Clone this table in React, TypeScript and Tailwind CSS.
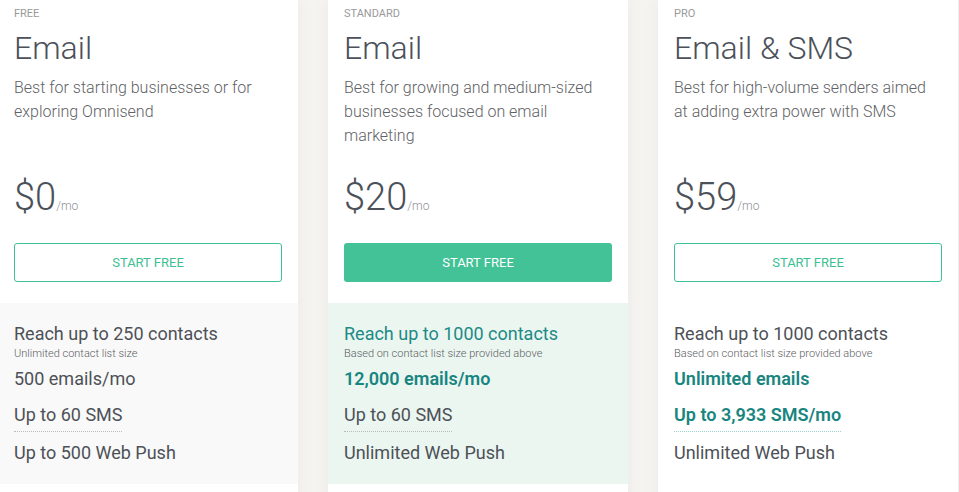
import React from 'react';

interface Plan {
    tier: string;
    name: string;
    description: string;
    price: string;
    filled: boolean;
    featureBg: string;
    reach: string;
    reachTeal: boolean;
    reachNote: string;
    emails: string;
    emailsStrong: boolean;
    sms: string;
    smsStrong: boolean;
    push: string;
}

const plans: Plan[] = [
    {
        tier: 'FREE',
        name: 'Email',
        description: 'Best for starting businesses or for exploring Omnisend',
        price: '$0',
        filled: false,
        featureBg: 'bg-[#f9f9f9]',
        reach: 'Reach up to 250 contacts',
        reachTeal: false,
        reachNote: 'Unlimited contact list size',
        emails: '500 emails/mo',
        emailsStrong: false,
        sms: 'Up to 60 SMS',
        smsStrong: false,
        push: 'Up to 500 Web Push',
    },
    {
        tier: 'STANDARD',
        name: 'Email',
        description: 'Best for growing and medium-sized businesses focused on email marketing',
        price: '$20',
        filled: true,
        featureBg: 'bg-[#ebf6f1]',
        reach: 'Reach up to 1000 contacts',
        reachTeal: true,
        reachNote: 'Based on contact list size provided above',
        emails: '12,000 emails/mo',
        emailsStrong: true,
        sms: 'Up to 60 SMS',
        smsStrong: false,
        push: 'Unlimited Web Push',
    },
    {
        tier: 'PRO',
        name: 'Email & SMS',
        description: 'Best for high-volume senders aimed at adding extra power with SMS',
        price: '$59',
        filled: false,
        featureBg: 'bg-white',
        reach: 'Reach up to 1000 contacts',
        reachTeal: false,
        reachNote: 'Based on contact list size provided above',
        emails: 'Unlimited emails',
        emailsStrong: true,
        sms: 'Up to 3,933 SMS/mo',
        smsStrong: true,
        push: 'Unlimited Web Push',
    },
];

const PlanCard: React.FC<{ plan: Plan }> = ({ plan }) => {
    return (
        <div className="w-[300px] shrink-0 bg-white shadow-[0_0_14px_rgba(120,110,90,0.08)] flex flex-col">
            {/* Header */}
            <div className="px-4 pt-[6px] pb-[21px]">
                <div className="text-[11px] leading-4 text-[#9a9a9a]">{plan.tier}</div>
                <h2 className="mt-[6px] text-[32px] leading-10 font-light text-[#4b5059]">{plan.name}</h2>
                <p className="mt-[8px] min-h-[72px] text-[16px] leading-6 font-light text-[#5f6266]">{plan.description}</p>
                <div className="mt-[30px] flex items-baseline">
                    <span className="text-[38px] leading-[38px] font-light text-[#4b5059]">{plan.price}</span>
                    <span className="text-[12px] font-light text-[#8f9296]">/mo</span>
                </div>
                <button
                    className={
                        plan.filled
                            ? 'mt-[27px] w-full h-[39px] rounded-[3px] bg-[#42c296] text-white text-[13px]'
                            : 'mt-[27px] w-full h-[39px] rounded-[3px] border border-[#3ec295] text-[#3dbe93] text-[13px]'
                    }
                >
                    START FREE
                </button>
            </div>

            {/* Features */}
            <div className={`${plan.featureBg} px-4 pt-[19px] pb-[19px] text-[18px] leading-6 text-[#4d5157]`}>
                <div className={plan.reachTeal ? 'text-[#1c8a86]' : ''}>{plan.reach}</div>
                <div className="text-[11px] leading-[15px] font-light text-[#5a5d61]">{plan.reachNote}</div>
                <div className={plan.emailsStrong ? 'mt-[6px] font-semibold text-[#188580]' : 'mt-[6px]'}>{plan.emails}</div>
                <div className="mt-3">
                    <span
                        className={
                            plan.smsStrong
                                ? 'inline-block pb-1 border-b border-dotted border-[#9dd3cf] font-semibold text-[#188580]'
                                : 'inline-block pb-1 border-b border-dotted border-[#b9bbbe]'
                        }
                    >
                        {plan.sms}
                    </span>
                </div>
                <div className="mt-[9px]">{plan.push}</div>
            </div>
            <div className="h-10 bg-white"></div>
        </div>
    );
};

const App: React.FC = () => {
    return (
        <div className="min-h-screen w-full overflow-hidden bg-[#f5f4f1] font-['Roboto',sans-serif]">
            <div className="flex gap-[30px] -ml-[2px]">
                {plans.map(plan => (
                    <PlanCard key={plan.tier} plan={plan} />
                ))}
            </div>
        </div>
    );
};

export default App;
